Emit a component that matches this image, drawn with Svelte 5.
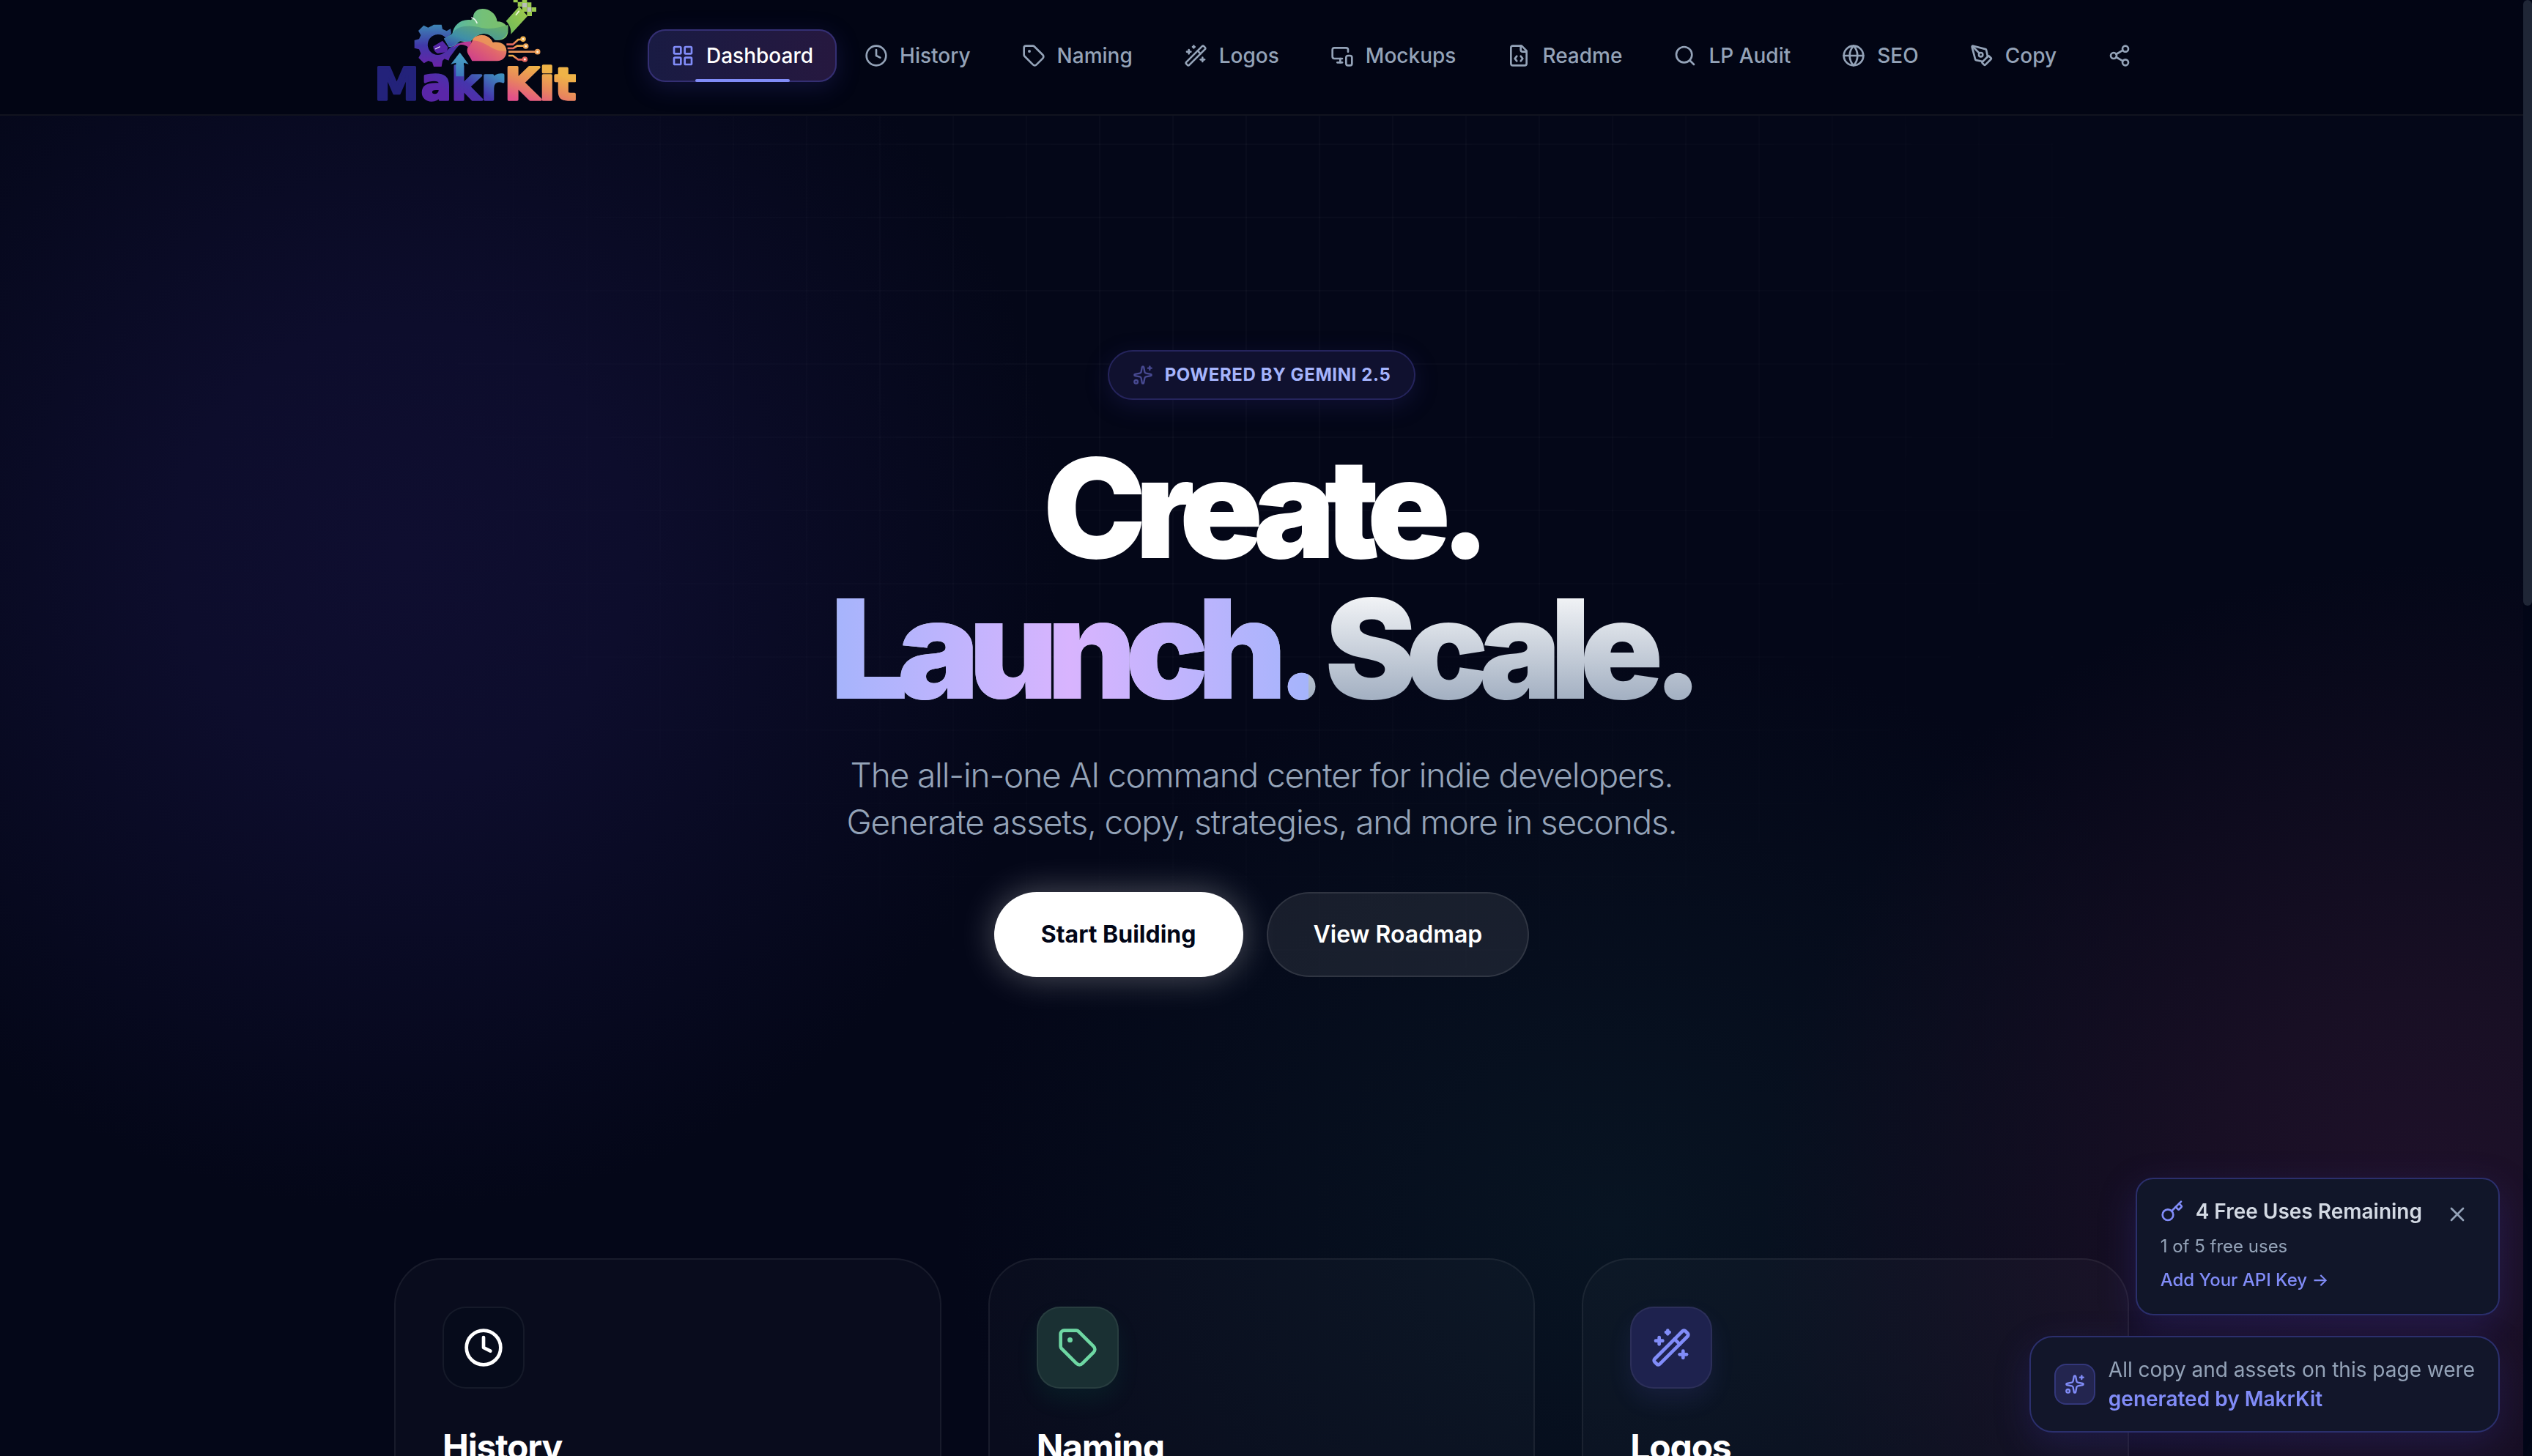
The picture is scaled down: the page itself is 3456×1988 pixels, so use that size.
<script>
  const icons = {
    grid: ['M4 3h5a1 1 0 0 1 1 1v5a1 1 0 0 1-1 1H4a1 1 0 0 1-1-1V4a1 1 0 0 1 1-1z', 'M15 3h5a1 1 0 0 1 1 1v5a1 1 0 0 1-1 1h-5a1 1 0 0 1-1-1V4a1 1 0 0 1 1-1z', 'M15 14h5a1 1 0 0 1 1 1v5a1 1 0 0 1-1 1h-5a1 1 0 0 1-1-1v-5a1 1 0 0 1 1-1z', 'M4 14h5a1 1 0 0 1 1 1v5a1 1 0 0 1-1 1H4a1 1 0 0 1-1-1v-5a1 1 0 0 1 1-1z'],
    clock: ['M22 12a10 10 0 1 1-20 0 10 10 0 0 1 20 0', 'M12 6v6l4 2'],
    tag: ['M12.586 2.586A2 2 0 0 0 11.172 2H4a2 2 0 0 0-2 2v7.172a2 2 0 0 0 .586 1.414l8.704 8.704a2.426 2.426 0 0 0 3.42 0l6.58-6.58a2.426 2.426 0 0 0 0-3.42z', 'M8 7.500a.5.5 0 1 1-1 0 .5.5 0 0 1 1 0'],
    wand: ['m21.64 3.64-1.28-1.28a1.21 1.21 0 0 0-1.72 0L2.36 18.64a1.21 1.21 0 0 0 0 1.72l1.28 1.28a1.2 1.2 0 0 0 1.72 0L21.64 5.36a1.2 1.2 0 0 0 0-1.72', 'm14 7 3 3', 'M5 6v4', 'M19 14v4', 'M10 2v2', 'M7 8H3', 'M21 16h-4', 'M11 3H9'],
    devices: ['M18 8V6a2 2 0 0 0-2-2H4a2 2 0 0 0-2 2v7a2 2 0 0 0 2 2h8', 'M10 19v-3.960', 'M7 19h5', 'M18 12h2a2 2 0 0 1 2 2v6a2 2 0 0 1-2 2h-2a2 2 0 0 1-2-2v-6a2 2 0 0 1 2-2z'],
    file: ['M10 12.500 8 15l2 2.500', 'm14 12.500 2 2.500-2 2.500', 'M14 2v4a2 2 0 0 0 2 2h4', 'M15 2H6a2 2 0 0 0-2 2v16a2 2 0 0 0 2 2h12a2 2 0 0 0 2-2V7z'],
    search: ['M19 11a8 8 0 1 1-16 0 8 8 0 0 1 16 0', 'm21 21-4.300-4.300'],
    globe: ['M22 12a10 10 0 1 1-20 0 10 10 0 0 1 20 0', 'M12 2a14.500 14.500 0 0 0 0 20 14.500 14.500 0 0 0 0-20', 'M2 12h20'],
    pen: ['M15.707 21.293a1 1 0 0 1-1.414 0l-1.586-1.586a1 1 0 0 1 0-1.414l5.586-5.586a1 1 0 0 1 1.414 0l1.586 1.586a1 1 0 0 1 0 1.414z', 'm18 13-1.375-6.874a1 1 0 0 0-.746-.776L3.235 2.028a1 1 0 0 0-1.207 1.207L5.350 15.879a1 1 0 0 0 .776.746L13 18', 'm2.300 2.300 7.286 7.286', 'M13 11a2 2 0 1 1-4 0 2 2 0 0 1 4 0'],
    share: ['M21 5a3 3 0 1 1-6 0 3 3 0 0 1 6 0', 'M9 12a3 3 0 1 1-6 0 3 3 0 0 1 6 0', 'M21 19a3 3 0 1 1-6 0 3 3 0 0 1 6 0', 'm8.590 13.510 6.830 3.980', 'm15.410 6.510-6.820 3.980'],
    key: ['m15.500 7.500 2.300 2.300a1 1 0 0 0 1.400 0l2.100-2.100a1 1 0 0 0 0-1.400L19 4', 'm21 2-9.600 9.600', 'M13 15.500a5.500 5.500 0 1 1-11 0 5.500 5.500 0 0 1 11 0'],
    close: ['M18 6 6 18', 'm6 6 12 12'],
    sparkles: ['M11.017 2.814a1 1 0 0 1 1.966 0l1.051 5.558a2 2 0 0 0 1.594 1.594l5.558 1.051a1 1 0 0 1 0 1.966l-5.558 1.051a2 2 0 0 0-1.594 1.594l-1.051 5.558a1 1 0 0 1-1.966 0l-1.051-5.558a2 2 0 0 0-1.594-1.594l-5.558-1.051a1 1 0 0 1 0-1.966l5.558-1.051a2 2 0 0 0 1.594-1.594z', 'M20 2v4', 'M22 4h-4', 'M6 20a2 2 0 1 1-4 0 2 2 0 0 1 4 0']
  };

  const nav = [
    { icon: 'grid', label: 'Dashboard' },
    { icon: 'clock', label: 'History' },
    { icon: 'tag', label: 'Naming' },
    { icon: 'wand', label: 'Logos' },
    { icon: 'devices', label: 'Mockups' },
    { icon: 'file', label: 'Readme' },
    { icon: 'search', label: 'LP Audit' },
    { icon: 'globe', label: 'SEO' },
    { icon: 'pen', label: 'Copy' }
  ];

  const cards = [
    { icon: 'clock', title: 'History', tone: 'plain' },
    { icon: 'tag', title: 'Naming', tone: 'green' },
    { icon: 'wand', title: 'Logos', tone: 'indigo' }
  ];

  let active = $state('Dashboard');
  let noticeOpen = $state(true);
</script>

{#snippet icon(name)}
  <svg class="icon" viewBox="0 0 24 24" aria-hidden="true">
    {#each icons[name] as d}<path {d} />{/each}
  </svg>
{/snippet}

<div class="shell">
  <div class="page">
    <header>
      <div class="bar">
        <a class="logo" href="#home" aria-label="MakrKit">
          <svg viewBox="78 0 840 468" aria-hidden="true">
            <defs>
              <linearGradient id="gear" x1="0" y1="0" x2="0" y2="1"><stop offset="0" stop-color="#3d86b4" /><stop offset=".5" stop-color="#4038a8" /><stop offset="1" stop-color="#6a22a8" /></linearGradient>
              <linearGradient id="cloud" x1="0" y1="0" x2="1" y2="0"><stop offset="0" stop-color="#4db3b4" /><stop offset=".6" stop-color="#74c078" /><stop offset="1" stop-color="#7cc06a" /></linearGradient>
              <linearGradient id="wave" x1="0" y1="1" x2="1" y2="0"><stop offset="0" stop-color="#3747b0" /><stop offset=".35" stop-color="#3f8fa8" /><stop offset="1" stop-color="#6bb262" /></linearGradient>
              <linearGradient id="warm" x1="0" y1="1" x2="1" y2="0"><stop offset="0" stop-color="#cc3a90" /><stop offset=".5" stop-color="#e0646e" /><stop offset="1" stop-color="#eda04e" /></linearGradient>
              <linearGradient id="pipe" x1="0" y1="1" x2="1" y2="0"><stop offset="0" stop-color="#6cb85c" /><stop offset="1" stop-color="#a3cc4a" /></linearGradient>
              <linearGradient id="wire" x1="0" y1="0" x2="0" y2="1"><stop offset="0" stop-color="#eeb04c" /><stop offset="1" stop-color="#e3645e" /></linearGradient>
              <linearGradient id="mid" gradientUnits="userSpaceOnUse" x1="440" y1="415" x2="540" y2="265"><stop offset="0" stop-color="#5a26a8" /><stop offset=".45" stop-color="#4436ac" /><stop offset="1" stop-color="#3f8fbe" /></linearGradient>
              <linearGradient id="kit" gradientUnits="userSpaceOnUse" x1="700" y1="415" x2="750" y2="270"><stop offset="0" stop-color="#e2508a" /><stop offset=".5" stop-color="#e8875c" /><stop offset="1" stop-color="#efb347" /></linearGradient>
              <linearGradient id="stem" x1="0" y1="0" x2="0" y2="1"><stop offset="0" stop-color="#4aa6c4" /><stop offset="1" stop-color="#3c78bc" /></linearGradient>
            </defs>
            <path fill="url(#gear)" d="M336 101h32l4 18 17 8 16-9 3 19-20 22a42 42 0 1 0-22 64c25-10 37-35 66-46l46-6c-40 4-50 30-76 63l-5 14-17-7-8 8-4 24h-32l-6-18-16-6-18 10-22-22 9-18-7-17-19-5v-32l19-5 7-16-10-18 22-22 18 9 17-8z" />
            <path fill="#5526a6" d="M334 190l38-23 22 26-4 20-38 6c-12-6-18-16-18-29z" />
            <path fill="none" stroke="#e8e6f8" stroke-width="4" d="M342 201l20-10" />
            <path fill="url(#cloud)" d="M378 158l34-18c4-36 36-64 76-58l10-8c-4-56 90-50 98 14 30 0 48 22 44 46-4 22-22 32-50 30-24-32-66-40-106 10l-40-5c-16 8-20 22-46 24z" />
            <path fill="url(#wave)" d="M378 158l34-20c20-38 80-36 120-24 40 8 70-2 108-12 6 36-18 66-54 62-24-32-66-40-102 8l-40-5c-16 6-18 22-46 24z" />
            <path fill="none" stroke="#e9f5ee" stroke-width="5" d="M490 72q16 4 24 24" />
            <path fill="url(#warm)" d="M493 250c-8-22-30-34-15-60 8-10 14-12 16-24 10-28 66-34 84 8 36-6 58 14 56 40-2 20-16 36-38 36z" />
            <path fill="#eda056" opacity=".7" d="M494 166c10-28 66-34 84 8 36-6 56 10 56 35-60 6-80-42-140-43z" />
            <path fill="#b83a94" d="M412 198c20-20 50-30 80-28-4 12-8 16-14 24-20-16-40-14-66 4z" />
            <path fill="url(#pipe)" d="M632 86l54-60 34 40-68 74c2-22-6-40-20-54z" />
            <path fill="none" stroke="#f2f8e4" stroke-width="5" d="M672 62l14-18" />
            <path fill="#9bcb4e" d="M662 0h18v10h-18zM680 8h18v20h-18zM698 0h20v12h-20zM718 10h18v20h-18zM698 30h20v18h-20zM736 30h20v18h-20zM718 48h20v18h-20z" />
            <path fill="#b9c0b6" d="M698 12h20v18h-20zM718 30h18v18h-18z" />
            <g fill="none" stroke="url(#wire)" stroke-width="8">
              <path d="M634 182h26l22-20h12" /><path d="M638 198h24l16-10h28" /><path d="M642 228h18l22 16h18" />
            </g>
            <path fill="none" stroke="#e9955a" stroke-width="8" d="M642 212H750" />
            <g fill="#fff3e0" stroke-width="7"><circle cx="702" cy="160" r="8" stroke="#eeb04c" /><circle cx="713" cy="189" r="8" stroke="#eca452" /><circle cx="761" cy="212" r="8" stroke="#ee9f56" /><circle cx="709" cy="243" r="8" stroke="#e3645e" /></g>
            <g class="word">
              <text x="93" y="409" fill="#23227a" stroke="#23227a">M</text>
              <text x="284" y="409" fill="url(#mid)" stroke="url(#mid)">akr</text>
              <text x="626" y="409" fill="url(#kit)" stroke="url(#kit)">Kit</text>
            </g>
            <path fill="url(#stem)" d="M443 215l36 48-20-6v56h-32v-56l-21 6z" />
          </svg>
        </a>
        <nav aria-label="Main">
          {#each nav as item}
            <button class="tab" class:active={active === item.label} onclick={() => (active = item.label)}>
              {@render icon(item.icon)}<span>{item.label}</span>
            </button>
          {/each}
          <button class="tab" aria-label="Share">{@render icon('share')}</button>
        </nav>
      </div>
    </header>

    <main>
      <section class="hero">
        <div class="badge">{@render icon('sparkles')}<span>Powered by Gemini 2.5</span></div>
        <h1>Create.<br /><span>Launch.</span> Scale.</h1>
        <p>The all-in-one AI command center for indie developers.<br />Generate assets, copy, strategies, and more in seconds.</p>
        <div class="actions">
          <button class="primary">Start Building</button>
          <button class="secondary">View Roadmap</button>
        </div>
      </section>

      <section class="cards">
        {#each cards as card}
          <article>
            <div class="tile {card.tone}">{@render icon(card.icon)}</div>
            <h2>{card.title}</h2>
          </article>
        {/each}
      </section>
    </main>
  </div>
  <div class="track"><div class="thumb"></div></div>

  <aside>
    {#if noticeOpen}
      <div class="notice">
        <div class="notice-text">
          <div class="notice-title">{@render icon('key')}<strong>4 Free Uses Remaining</strong></div>
          <span class="usage">1 of 5 free uses</span>
          <a href="#key">Add Your API Key →</a>
        </div>
        <button class="close" aria-label="Dismiss" onclick={() => (noticeOpen = false)}>{@render icon('close')}</button>
      </div>
    {/if}
    <div class="credit">
      <div class="credit-icon">{@render icon('sparkles')}</div>
      <div>All copy and assets on this page were<br /><a href="#about">generated by MakrKit</a></div>
    </div>
  </aside>
</div>

<style>
  :global(body) {
    background: #020617;
  }
  .shell {
    display: flex;
    height: 100vh;
    overflow: hidden;
    font-family: Inter, sans-serif;
    font-size: 28px;
    line-height: 40px;
    color: #94a3b8;
    background: #020514;
    -webkit-font-smoothing: antialiased;
  }
  button {
    font: inherit;
    border: 0;
    background: none;
    cursor: pointer;
  }
  a {
    color: #818cf8;
    text-decoration: none;
  }
  .icon {
    display: block;
    flex: none;
    width: 32px;
    height: 32px;
    fill: none;
    stroke: currentColor;
    stroke-width: 2;
    stroke-linecap: round;
    stroke-linejoin: round;
  }
  .page {
    flex: 1;
    min-width: 0;
    position: relative;
    isolation: isolate;
    background:
      radial-gradient(ellipse 900px 900px at 16% 38%, #0f0e30 0%, #0d0d2c 35%, #07092000 100%),
      radial-gradient(ellipse 900px 900px at 96% 84%, #1f112a 0%, #180f24 35%, #0b081c00 100%),
      radial-gradient(ellipse 900px 800px at 64% 84%, #081422 0%, #04091a00 100%),
      #040718;
  }
  .page::before {
    content: '';
    position: absolute;
    inset: 0;
    z-index: -1;
    background:
      repeating-linear-gradient(90deg, #ffffff06 0 2px, transparent 2px 100px),
      repeating-linear-gradient(180deg, transparent 0 96px, #ffffff06 96px 98px, transparent 98px 100px);
    mask-image: radial-gradient(ellipse 40% 60% at 50% 20%, #000 20%, transparent 100%);
  }
  header {
    background: #020514;
    border-bottom: 2px solid #11131f;
  }
  .bar {
    display: flex;
    align-items: flex-start;
    gap: 98px;
    max-width: 2432px;
    height: 156px;
    margin: 0 auto;
  }
  .logo {
    flex: none;
    width: 280px;
  }
  .logo svg {
    display: block;
    width: 100%;
  }
  .word {
    font-family: 'DejaVu Sans', sans-serif;
    font-size: 184px;
    font-weight: 700;
    stroke-width: 10px;
    stroke-linejoin: round;
  }
  nav {
    display: flex;
    gap: 6px;
    padding-top: 40px;
  }
  .tab {
    position: relative;
    display: flex;
    align-items: center;
    gap: 16px;
    height: 72px;
    padding: 0 32px;
    border-radius: 24px;
    font-weight: 500;
    color: #94a3b8;
    white-space: nowrap;
  }
  .active {
    color: #fff;
    background: linear-gradient(90deg, #191b43, #26183f);
    box-shadow: inset 0 0 0 2px #342f73, 0 8px 32px #312e8155;
  }
  .active .icon {
    color: #818cf8;
  }
  .active::after {
    content: '';
    position: absolute;
    bottom: 0;
    left: 25%;
    width: 50%;
    height: 4px;
    border-radius: 2px;
    background: #818cf8;
  }
  .hero {
    display: flex;
    flex-direction: column;
    align-items: center;
    padding-top: 320px;
    text-align: center;
  }
  .badge {
    display: flex;
    align-items: center;
    gap: 16px;
    padding: 16px 32px;
    border: 2px solid #25245c;
    border-radius: 34px;
    background: #10112f;
    box-shadow: 0 8px 32px #312e8144;
    font-size: 24px;
    line-height: 32px;
    font-weight: 700;
    letter-spacing: 0.025em;
    text-transform: uppercase;
    color: #a5b4fc;
  }
  .badge .icon {
    width: 28px;
    height: 28px;
    color: #484a92;
  }
  h1 {
    margin: 52px 0 44px;
    font-size: 188px;
    line-height: 192px;
    font-weight: 900;
    letter-spacing: -0.08em;
    color: transparent;
    background: linear-gradient(180deg, #fff, #fff 50%, #94a3b8);
    background-clip: text;
  }
  h1 span {
    background: linear-gradient(90deg, #a5b4fc, #d8b4fe, #a5b4fc);
    background-clip: text;
  }
  p {
    margin: 0;
    font-size: 46px;
    line-height: 64px;
    font-weight: 300;
    letter-spacing: -0.025em;
  }
  .actions {
    display: flex;
    gap: 32px;
    margin-top: 64px;
    font-size: 32px;
  }
  .actions button {
    height: 116px;
    padding: 0 64px;
    border-radius: 58px;
    font-weight: 600;
  }
  .actions .primary {
    color: #020617;
    background: #fff;
    box-shadow: 0 0 48px #ffffff4d;
    font-weight: 700;
  }
  .secondary {
    color: #fff;
    background: #ffffff14;
    box-shadow: inset 0 0 0 2px #ffffff1a;
  }
  .cards {
    display: grid;
    grid-template-columns: repeat(3, 1fr);
    gap: 64px;
    max-width: 2368px;
    margin: 384px auto 0;
  }
  article {
    min-height: 400px;
    padding: 64px;
    border: 2px solid #ffffff10;
    border-radius: 64px;
    background: #ffffff06;
  }
  .tile {
    display: grid;
    place-items: center;
    box-sizing: border-box;
    width: 112px;
    height: 112px;
    border: 2px solid #ffffff10;
    border-radius: 32px;
  }
  .tile .icon {
    width: 56px;
    height: 56px;
  }
  .plain {
    color: #fff;
    background: #060b1b;
  }
  .green {
    color: #6ed7a3;
    background: #1a3033;
    box-shadow: 0 16px 32px #10b98114;
  }
  .indigo {
    color: #818cf8;
    background: #1e224e;
    box-shadow: 0 16px 32px #6366f11c;
  }
  h2 {
    margin: 48px 0 0;
    font-size: 48px;
    line-height: 64px;
    font-weight: 700;
    letter-spacing: -0.025em;
    color: #fff;
  }
  .track {
    flex: none;
    width: 12px;
    background: #020617;
  }
  .thumb {
    height: 41.6%;
    border-radius: 6px;
    background: #1f2636;
  }
  aside {
    position: fixed;
    right: 44px;
    bottom: 32px;
    display: flex;
    flex-direction: column;
    align-items: flex-end;
    gap: 28px;
  }
  .notice {
    display: flex;
    align-items: flex-start;
    gap: 32px;
    padding: 24px 40px 28px 32px;
    border: 2px solid #2b2f6c;
    border-radius: 24px;
    background: #111629;
    box-shadow: 0 16px 48px #312e8166;
  }
  .notice-text {
    display: flex;
    flex-direction: column;
    gap: 10px;
    font-size: 24px;
    line-height: 36px;
  }
  .notice-title {
    display: flex;
    align-items: center;
    gap: 16px;
    font-size: 28px;
    line-height: 40px;
    color: #818cf8;
  }
  .notice strong {
    font-weight: 600;
    color: #d3d9e3;
  }
  .notice a {
    font-weight: 500;
  }
  .close {
    padding: 8px 0 0;
    color: #94a3b8;
  }
  .credit {
    display: flex;
    align-items: center;
    gap: 18px;
    padding: 24px 32px;
    border: 2px solid #2b2f6c;
    border-radius: 32px;
    background: #12162a;
    box-shadow: 0 16px 48px #312e8155;
  }
  .credit a {
    font-weight: 600;
  }
  .credit-icon {
    display: grid;
    place-items: center;
    box-sizing: border-box;
    width: 56px;
    height: 56px;
    border: 2px solid #33377a;
    border-radius: 16px;
    background: #23254f;
    color: #818cf8;
  }
  .credit-icon .icon {
    width: 28px;
    height: 28px;
  }
</style>
